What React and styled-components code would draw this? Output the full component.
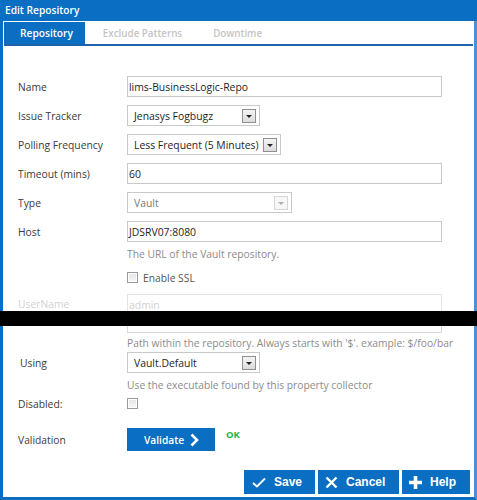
import React from "react";
import styled, { createGlobalStyle } from "styled-components";

const BLUE = "#0a6fc2";

const Global = createGlobalStyle`
  html, body { margin: 0; padding: 0; background: #fff; }
  body { font-family: "Open Sans", "Liberation Sans", sans-serif; }
  * { box-sizing: border-box; }
`;

const Page = styled.div`
  width: 477px;
  height: 500px;
  display: flex;
  flex-direction: column;
  overflow: hidden;
`;

const TopPart = styled.div`
  height: 311px;
  overflow: hidden;
  display: flex;
  flex-direction: column;
`;

const TitleBar = styled.div`
  height: 21px;
  background: ${BLUE};
  color: #fff;
  font-weight: 600;
  font-size: 10.2px;
  line-height: 21px;
  padding-left: 5px;
  flex: none;
`;

const Body = styled.div`
  flex: 1;
  display: flex;
  flex-direction: column;
  border-left: 3px solid ${BLUE};
  border-right: 3px solid #4d8fd0;
  background: #fff;
  ${(p) => (p.$bottom ? `border-bottom: 3px solid ${BLUE};` : "")}
`;

const TabStrip = styled.div`
  margin: 1px 1px 0 1px;
  display: flex;
  height: 24px;
  border-bottom: 2px solid #1d62ab;
  flex: none;
`;

const Tab = styled.div`
  height: 22px;
  padding: 0 ${(p) => p.$pr}px 0 ${(p) => p.$pl}px;
  display: flex;
  align-items: center;
  font-size: ${(p) => (p.$active ? 10.2 : 9.8)}px;
  font-weight: 600;
  color: ${(p) => (p.$active ? "#fff" : "#c4c4c4")};
  background: ${(p) => (p.$active ? BLUE : "transparent")};
`;

const Form = styled.div`
  display: flex;
  flex-direction: column;
  padding: ${(p) => p.$pt}px 32px 0 15px;
`;

const Row = styled.div`
  display: flex;
  align-items: center;
  min-height: ${(p) => p.$h || 21}px;
  margin-top: ${(p) => p.$mt || 0}px;
`;

const Label = styled.div`
  width: 109px;
  flex: none;
  font-size: 10.3px;
  line-height: 14px;
  color: ${(p) => (p.$disabled ? "#d2d2d2" : "#3a3a3a")};
  padding-left: ${(p) => p.$pl || 0}px;
  ${(p) => (p.$dy ? `position: relative; top: ${p.$dy}px;` : "")}
`;

const TextInput = styled.div`
  flex: 1;
  height: 21px;
  border: 1px solid ${(p) => (p.$disabled ? "#e4e4e4" : "#c9c9c9")};
  display: flex;
  align-items: center;
  padding-left: 1px;
  font-size: 10.4px;
  color: ${(p) => (p.$disabled ? "#cfcfcf" : "#1e1e1e")};
`;

const ClippedInput = styled.div`
  height: 7px;
  margin-left: 109px;
  border: 1px solid #d8d8d8;
  border-top: none;
`;

const Select = styled.div`
  width: ${(p) => p.$w}px;
  height: 21px;
  border: 1px solid #c9c9c9;
  display: flex;
  align-items: center;
  justify-content: space-between;
  padding: 0 3px 0 6px;
  font-size: 10.4px;
  color: ${(p) => (p.$disabled ? "#7a7a7a" : "#1e1e1e")};
`;

const ArrowBox = styled.div`
  width: 14px;
  height: 14px;
  border: 1px solid ${(p) => (p.$disabled ? "#d6d6d6" : "#8f8f8f")};
  background: ${(p) =>
    p.$disabled ? "#f7f7f7" : "linear-gradient(#f4f4f4, #dcdcdc)"};
  display: flex;
  align-items: center;
  justify-content: center;
  &::after {
    content: "";
    width: 0;
    height: 0;
    border-left: 3px solid transparent;
    border-right: 3px solid transparent;
    border-top: 3px solid ${(p) => (p.$disabled ? "#b0b0b0" : "#222")};
    margin-top: 1px;
  }
`;

const Help = styled.div`
  margin-left: 109px;
  margin-top: ${(p) => p.$mt || 0}px;
  height: 14px;
  line-height: 14px;
  font-size: 10.3px;
  color: #8c8c8c;
  white-space: nowrap;
`;

const Check = styled.span`
  width: 11px;
  height: 11px;
  border: 1px solid #9a9a9a;
  background: linear-gradient(#e4e4e4, #f8f8f8);
  box-shadow: inset 0 0 0 1px #fff;
  display: inline-block;
  flex: none;
`;

const CheckRow = styled.div`
  margin-left: ${(p) => p.$ml || 109}px;
  margin-top: ${(p) => p.$mt || 0}px;
  height: 13px;
  display: flex;
  align-items: center;
  gap: 5px;
  font-size: 10.3px;
  color: #555;
`;

const Band = styled.div`
  height: 15px;
  background: #000;
  flex: none;
`;

const ValidateButton = styled.div`
  width: 88px;
  height: 23px;
  background: ${BLUE};
  color: #fff;
  font-size: 10.2px;
  font-weight: 600;
  display: flex;
  align-items: center;
  padding-left: 17px;
  gap: 6px;
`;

const Ok = styled.div`
  font-size: 9.5px;
  font-weight: 700;
  color: #27b24a;
  margin-left: 11px;
  align-self: flex-start;
`;

const Footer = styled.div`
  display: flex;
  justify-content: flex-end;
  gap: 3px;
  padding-right: 4px;
  margin-top: 19px;
`;

const FooterButton = styled.div`
  width: ${(p) => p.$w}px;
  height: 24px;
  background: ${BLUE};
  color: #fff;
  display: flex;
  align-items: center;
  padding-left: ${(p) => p.$pl}px;
  gap: 8px;
  font-family: "Liberation Sans", Arial, sans-serif;
  font-weight: 700;
  font-size: 12px;
`;

const CheckIcon = () => (
  <svg width="14" height="11" viewBox="0 0 14 11">
    <path d="M1 6 L5 9.5 L13 1.5" fill="none" stroke="#fff" strokeWidth="1.8" />
  </svg>
);
const XIcon = () => (
  <svg width="13" height="13" viewBox="0 0 13 13">
    <path d="M1.5 1.5 L11.5 11.5 M11.5 1.5 L1.5 11.5" fill="none" stroke="#fff" strokeWidth="2.4" />
  </svg>
);
const PlusIcon = () => (
  <svg width="13" height="13" viewBox="0 0 13 13">
    <path d="M6.5 0 V13 M0 6.5 H13" fill="none" stroke="#fff" strokeWidth="3.6" />
  </svg>
);
const Chevron = () => (
  <svg width="9" height="14" viewBox="0 0 9 14">
    <path d="M1.5 1.5 L7 7 L1.5 12.5" fill="none" stroke="#fff" strokeWidth="2.6" />
  </svg>
);

export default function App() {
  return (
    <Page>
      <Global />
      <TopPart>
        <TitleBar>Edit Repository</TitleBar>
        <Body>
          <TabStrip>
            <Tab $active $pl={16} $pr={12}>Repository</Tab>
            <Tab $pl={18} $pr={12}>Exclude Patterns</Tab>
            <Tab $pl={19} $pr={10}>Downtime</Tab>
          </TabStrip>
          <Form $pt={30}>
            <Row>
              <Label>Name</Label>
              <TextInput>lims-BusinessLogic-Repo</TextInput>
            </Row>
            <Row $mt={8}>
              <Label>Issue Tracker</Label>
              <Select $w={133}>
                Jenasys Fogbugz
                <ArrowBox />
              </Select>
            </Row>
            <Row $mt={8}>
              <Label>Polling Frequency</Label>
              <Select $w={154}>
                Less Frequent (5 Minutes)
                <ArrowBox />
              </Select>
            </Row>
            <Row $mt={8}>
              <Label>Timeout (mins)</Label>
              <TextInput>60</TextInput>
            </Row>
            <Row $mt={8}>
              <Label>Type</Label>
              <Select $w={165} $disabled>
                Vault
                <ArrowBox $disabled />
              </Select>
            </Row>
            <Row $mt={8}>
              <Label>Host</Label>
              <TextInput>JDSRV07:8080</TextInput>
            </Row>
            <Help $mt={5}>The URL of the Vault repository.</Help>
            <CheckRow $mt={10}>
              <Check />
              Enable SSL
            </CheckRow>
            <Row $mt={10}>
              <Label $disabled $dy={-1}>UserName</Label>
              <TextInput $disabled>admin</TextInput>
            </Row>
          </Form>
        </Body>
      </TopPart>
      <Band />
      <Body $bottom>
        <Form $pt={0}>
          <ClippedInput />
          <Help $mt={3}>Path within the repository. Always starts with '$'. example: $/foo/bar</Help>
          <Row $mt={2}>
            <Label $pl={2}>Using</Label>
            <Select $w={133}>
              Vault.Default
              <ArrowBox />
            </Select>
          </Row>
          <Help $mt={5}>Use the executable found by this property collector</Help>
          <Row $h={13} $mt={4}>
            <Label $dy={1}>Disabled:</Label>
            <Check />
          </Row>
          <Row $h={23} $mt={18}>
            <Label>Validation</Label>
            <ValidateButton>
              Validate
              <Chevron />
            </ValidateButton>
            <Ok>OK</Ok>
          </Row>
        </Form>
        <Footer>
          <FooterButton $w={71} $pl={8}>
            <CheckIcon />
            Save
          </FooterButton>
          <FooterButton $w={81} $pl={7}>
            <XIcon />
            Cancel
          </FooterButton>
          <FooterButton $w={68} $pl={7}>
            <PlusIcon />
            Help
          </FooterButton>
        </Footer>
      </Body>
    </Page>
  );
}
